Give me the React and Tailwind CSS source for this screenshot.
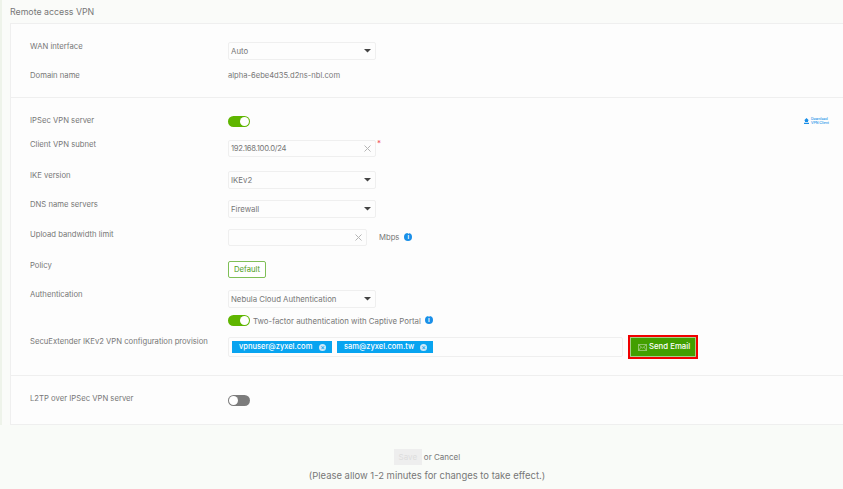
import React from "react";

function Caret() {
  return (
    <svg width="7" height="3.5" viewBox="0 0 8 4" className="block">
      <path d="M0 0H8L4 4Z" fill="#444" />
    </svg>
  );
}

function Cross() {
  return (
    <svg width="7" height="7" viewBox="0 0 7 7" className="block">
      <path d="M0.5 0.5L6.5 6.5M6.5 0.5L0.5 6.5" stroke="#b5b5b5" strokeWidth="1" fill="none" />
    </svg>
  );
}

function Info() {
  return (
    <span className="flex h-[8px] w-[8px] items-center justify-center rounded-full bg-[#1a8fe8] text-[6px] font-bold leading-none text-white">
      i
    </span>
  );
}

function Select({ value }) {
  return (
    <div className="flex h-[18px] w-[148px] items-center justify-between rounded-[2px] border border-[#efefef] bg-[#fdfdfd] pl-[2px] pr-[4px] text-[7.8px] text-[#777]">
      <span className="pt-[1px]">{value}</span>
      <Caret />
    </div>
  );
}

function Toggle({ on }) {
  return on ? (
    <div className="flex h-[11px] w-[22px] items-center justify-end rounded-full bg-[#5fb500] pr-[1px]">
      <div className="h-[9px] w-[9px] rounded-full bg-white" />
    </div>
  ) : (
    <div className="flex h-[11px] w-[22px] items-center justify-start rounded-full bg-[#7c7c7c] pl-[1px]">
      <div className="h-[9px] w-[9px] rounded-full bg-white" />
    </div>
  );
}

function Row({ label, h, labelTop = 0, ctlTop = 0, children, right }) {
  return (
    <div className="flex pl-[19px]" style={{ height: h }}>
      <div className="w-[198px] shrink-0 text-[7.7px] leading-[10px] text-[#777]" style={{ marginTop: labelTop }}>
        {label}
      </div>
      <div className="flex min-w-0 flex-1 flex-col" style={{ marginTop: ctlTop }}>{children}</div>
      {right}
    </div>
  );
}

function Tag({ text, w }) {
  return (
    <div className="flex h-[12px] items-center justify-between bg-[#08a4f0] pl-[7px] pr-[6px] text-[7.5px] font-medium text-white" style={{ width: w }}>
      <span>{text}</span>
      <span className="flex h-[7px] w-[7px] items-center justify-center rounded-full bg-[#cfe9f8] text-[7px] leading-none text-[#08a4f0]">×</span>
    </div>
  );
}

export default function App() {
  return (
    <div className="h-[489px] w-[843px] overflow-hidden bg-[#f9fbf8] font-['Inter',sans-serif]">
      <div className="flex h-[425px]">
        <div className="h-full w-[2px] shrink-0 bg-[#eef3ea]" />
        <div className="flex min-w-0 flex-1 flex-col bg-[#fafbf9] pl-[8px]">
          <div className="flex h-[23px] items-start pt-[7px] text-[8.8px] leading-[10px] text-[#777]">Remote access VPN</div>
          <div className="flex-1 border border-r-0 border-[#efefef] bg-[#fdfdfd]">
            <div className="h-[74px] border-b border-[#efefef] pt-[16px]">
              <Row label="WAN interface" h={31} labelTop={2} ctlTop={2}>
                <Select value="Auto" />
              </Row>
              <Row label="Domain name" h={20}>
                <div className="text-[7.6px] leading-[10px] text-[#777]">alpha-6ebe4d35.d2ns-nbl.com</div>
              </Row>
            </div>
            <div className="h-[278px] border-b border-[#efefef] pt-[18px]">
              <Row
                label="IPSec VPN server"
                h={24}
                right={
                  <div className="flex w-[39px] shrink-0 items-start gap-[2px] pr-[12px] pt-[1px]">
                    <svg width="5" height="6" viewBox="0 0 5 6" className="mt-[1px] shrink-0">
                      <path d="M2.5 0L5 2.5H4V4H1V2.5H0ZM0 4.8H5V6H0Z" fill="#1a8fe8" />
                    </svg>
                    <div className="text-[3.5px] font-medium leading-[4px] text-[#1a8fe8]">Download VPN Client</div>
                  </div>
                }
              >
                <Toggle on />
              </Row>
              <Row label="Client VPN subnet" h={32}>
                <div className="relative flex h-[17px] w-[148px] items-center justify-between rounded-[2px] border border-[#efefef] bg-[#fdfdfd] pl-[2px] pr-[4px] text-[7.7px] text-[#777]">
                  <span className="tracking-[-0.3px]">192.168.100.0/24</span>
                  <Cross />
                  <span className="absolute left-[148px] top-[-2px] text-[8px] leading-[8px] text-[#f0505a]">*</span>
                </div>
              </Row>
              <Row label="IKE version" h={29} labelTop={-1} ctlTop={-1}>
                <Select value="IKEv2" />
              </Row>
              <Row label="DNS name servers" h={29} labelTop={-1} ctlTop={-1}>
                <Select value="Firewall" />
              </Row>
              <Row label="Upload bandwidth limit" h={33} ctlTop={-1}>
                <div className="flex items-center">
                  <div className="flex h-[17px] w-[139px] items-center justify-end rounded-[2px] border border-[#efefef] bg-[#fdfdfd] pr-[4px]">
                    <Cross />
                  </div>
                  <span className="ml-[12px] text-[7.7px] text-[#777]">Mbps</span>
                  <span className="mb-[1px] ml-[5px]"><Info /></span>
                </div>
              </Row>
              <Row label="Policy" h={28} labelTop={-2} ctlTop={-2}>
                <button className="flex h-[17px] w-[38px] items-center justify-center rounded-[2px] border border-[#7fbf57] bg-white text-[7.7px] text-[#4f9e1c]">
                  Default
                </button>
              </Row>
              <Row label="Authentication" h={24} labelTop={-1} ctlTop={-1}>
                <Select value="Nebula Cloud Authentication" />
              </Row>
              <Row label="" h={22}>
                <div className="flex items-center">
                  <Toggle on />
                  <span className="ml-[3px] text-[7.85px] leading-[10px] text-[#777]">Two-factor authentication with Captive Portal</span>
                  <span className="mb-[1px] ml-[4px]"><Info /></span>
                </div>
              </Row>
              <Row label="SecuExtender IKEv2 VPN configuration provision" h={24} ctlTop={-2}>
                <div className="flex items-center">
                  <div className="flex h-[20px] w-[395px] items-center gap-[5px] rounded-[2px] border border-[#efefef] bg-[#fdfdfd] pl-[3px]">
                    <Tag text="vpnuser@zyxel.com" w={100} />
                    <Tag text="sam@zyxel.com.tw" w={96} />
                  </div>
                  <div className="ml-[5px] border-2 border-[#f00000]">
                    <button className="flex h-[20px] w-[66px] items-center justify-start gap-[2px] border border-[#a5cf86] bg-[#429f00] pl-[7px] text-[7.8px] font-medium text-white">
                      <svg width="9" height="7" viewBox="0 0 9 7">
                        <path d="M0.5 0.5H8.5V6.5H0.5ZM0.5 0.5L4.5 4L8.5 0.5M0.5 6.5L3.2 3M8.5 6.5L5.8 3" fill="none" stroke="#c3deb0" strokeWidth="0.6" />
                      </svg>
                      Send Email
                    </button>
                  </div>
                </div>
              </Row>
            </div>
            <div className="pt-[18px]">
              <Row label="L2TP over IPSec VPN server" h={14} ctlTop={1}>
                <Toggle />
              </Row>
            </div>
          </div>
        </div>
      </div>
      <div className="flex flex-col items-center pl-[11px] pt-[24px]">
        <div className="flex items-center">
          <button className="flex h-[16px] w-[28px] items-center justify-center bg-[#eeeeee] text-[8px] text-[#dddddd]">Save</button>
          <span className="ml-[2px] text-[8px] text-[#777]">or Cancel</span>
        </div>
        <div className="mt-[5px] text-[9.45px] leading-[12px] text-[#777]">(Please allow 1-2 minutes for changes to take effect.)</div>
      </div>
    </div>
  );
}
